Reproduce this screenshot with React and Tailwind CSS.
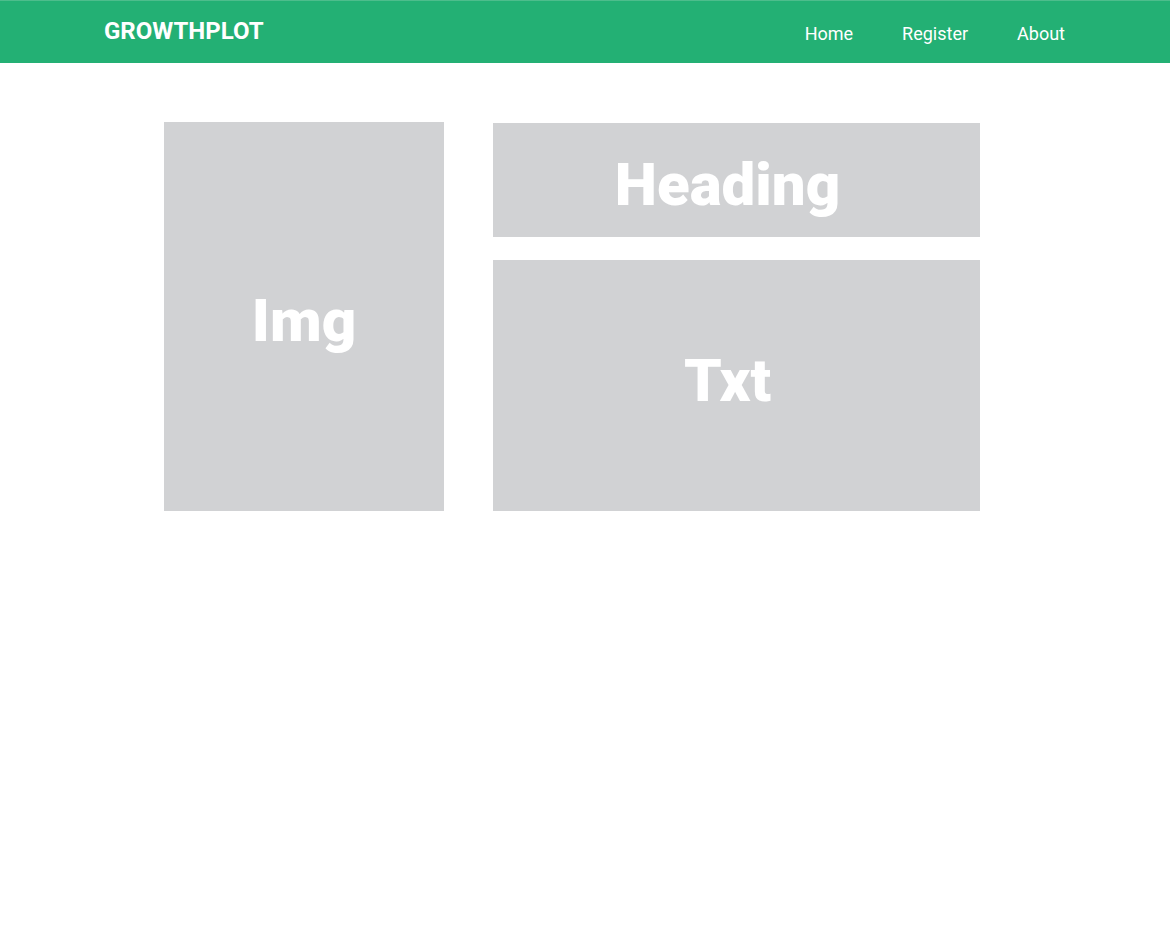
export default function App() {
  return (
    <div className="min-h-[938px] bg-white" style={{ fontFamily: "Roboto, 'Liberation Sans', sans-serif" }}>
      <nav className="h-[63px] bg-[#23b074] border-t border-[#4dbd8c] flex items-center justify-between pl-[104px] pr-[105px]">
        <span className="text-white text-[24px] font-bold mb-[2px]">GROWTHPLOT</span>
        <ul className="flex items-center gap-[49px] text-white text-[18px] pt-[2px]">
          <li>Home</li>
          <li>Register</li>
          <li>About</li>
        </ul>
      </nav>

      <main className="flex gap-[49px] pl-[164px] pt-[59px]">
        <div className="w-[280px] h-[389px] bg-[#d1d2d4] flex items-center justify-center">
          <span className="text-white text-[60px] font-black leading-none pt-[8px]">Img</span>
        </div>
        <div className="flex flex-col gap-[23px] pt-px">
          <div className="w-[487px] h-[114px] bg-[#d1d2d4] flex items-center justify-center pr-[18px]">
            <span className="text-white text-[60px] font-black leading-none pt-[10px]">Heading</span>
          </div>
          <div className="w-[487px] h-[251px] bg-[#d1d2d4] flex items-center justify-center pr-[18px]">
            <span className="text-white text-[60px] font-black leading-none mb-[10px]">Txt</span>
          </div>
        </div>
      </main>
    </div>
  );
}
